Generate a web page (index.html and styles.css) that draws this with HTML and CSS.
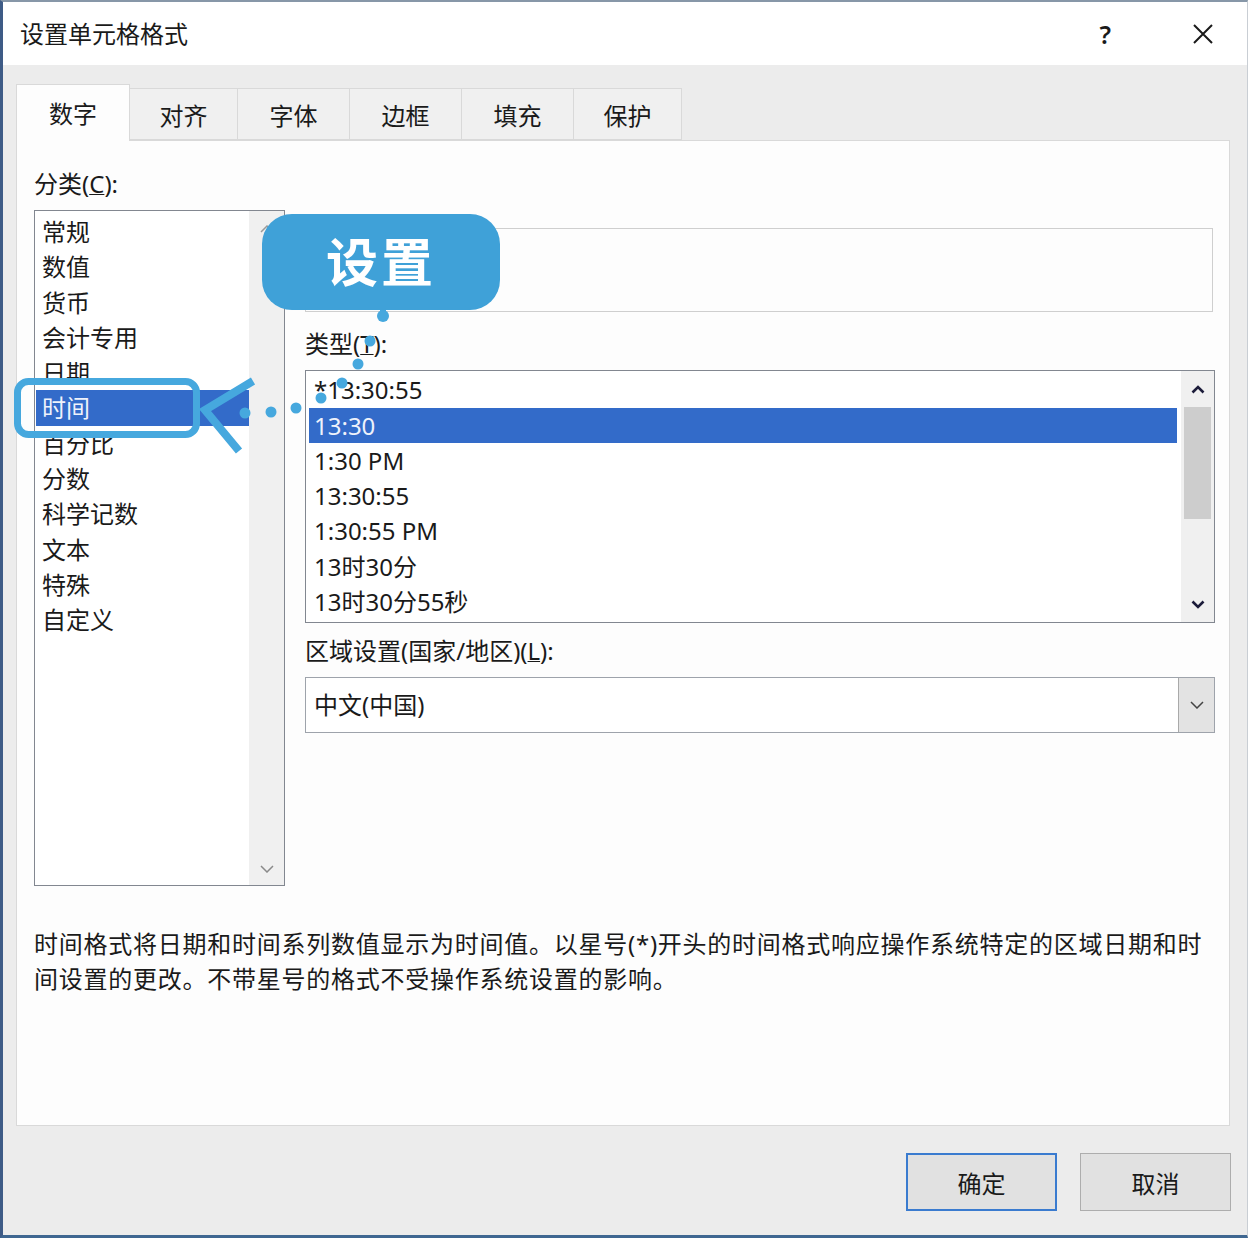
FILE: index.html
```html
<!DOCTYPE html>
<html lang="zh-CN">
<head>
    <meta charset="UTF-8">
    <title>设置单元格格式</title>
    <link rel="stylesheet" href="styles.css">
</head>
<body>

<div class="dialog">
    <div class="titlebar">
        <span class="title">设置单元格格式</span>
        <span class="help">?</span>
        <svg class="close" width="22" height="22" viewBox="0 0 22 22">
            <path d="M2 2 L20 20 M20 2 L2 20" stroke="#1a1a1a" stroke-width="2" fill="none"/>
        </svg>
    </div>

    <div class="body">
        <div class="tabs">
            <div class="tab active">数字</div>
            <div class="tab">对齐</div>
            <div class="tab">字体</div>
            <div class="tab">边框</div>
            <div class="tab">填充</div>
            <div class="tab">保护</div>
        </div>

        <div class="panel">
            <div class="columns">
                <div class="col-left">
                    <div class="label">分类(<u>C</u>):</div>
                    <div class="listbox category">
                        <ul class="items">
                            <li class="item">常规</li>
                            <li class="item">数值</li>
                            <li class="item">货币</li>
                            <li class="item">会计专用</li>
                            <li class="item">日期</li>
                            <li class="item selected">时间</li>
                            <li class="item">百分比</li>
                            <li class="item">分数</li>
                            <li class="item">科学记数</li>
                            <li class="item">文本</li>
                            <li class="item">特殊</li>
                            <li class="item">自定义</li>
                        </ul>
                        <div class="scrollbar light">
                            <svg class="arrow" width="14" height="8" viewBox="0 0 14 8"><path d="M1 7 L7 1 L13 7" stroke="#9a9a9a" stroke-width="1.5" fill="none"/></svg>
                            <div class="track"></div>
                            <svg class="arrow" width="14" height="8" viewBox="0 0 14 8"><path d="M1 1 L7 7 L13 1" stroke="#8a8a8a" stroke-width="1.5" fill="none"/></svg>
                        </div>
                    </div>
                </div>

                <div class="col-right">
                    <div class="sample"></div>
                    <div class="label">类型(<u>T</u>):</div>
                    <div class="listbox types">
                        <ul class="items">
                            <li class="item">*13:30:55</li>
                            <li class="item selected">13:30</li>
                            <li class="item">1:30 PM</li>
                            <li class="item">13:30:55</li>
                            <li class="item">1:30:55 PM</li>
                            <li class="item">13时30分</li>
                            <li class="item">13时30分55秒</li>
                        </ul>
                        <div class="scrollbar">
                            <div class="arrow-btn">
                                <svg width="14" height="9" viewBox="0 0 14 9"><path d="M1.5 7.5 L7 2 L12.5 7.5" stroke="#1c1c3a" stroke-width="2.6" fill="none"/></svg>
                            </div>
                            <div class="thumb"></div>
                            <div class="track"></div>
                            <div class="arrow-btn">
                                <svg width="14" height="9" viewBox="0 0 14 9"><path d="M1.5 1.5 L7 7 L12.5 1.5" stroke="#1c1c3a" stroke-width="2.6" fill="none"/></svg>
                            </div>
                        </div>
                    </div>
                    <div class="label">区域设置(国家/地区)(<u>L</u>):</div>
                    <div class="combo">
                        <span class="combo-value">中文(中国)</span>
                        <div class="combo-btn">
                            <svg width="14" height="8" viewBox="0 0 14 8"><path d="M1 1 L7 7 L13 1" stroke="#444" stroke-width="1.5" fill="none"/></svg>
                        </div>
                    </div>
                </div>
            </div>

            <p class="desc">时间格式将日期和时间系列数值显示为时间值。以星号(*)开头的时间格式响应操作系统特定的区域日期和时间设置的更改。不带星号的格式不受操作系统设置的影响。</p>
        </div>

        <div class="buttons">
            <button class="btn primary">确定</button>
            <button class="btn">取消</button>
        </div>
    </div>

    <!-- annotation drawn over the dialog -->
    <svg class="callout" width="1248" height="1238" viewBox="0 0 1248 1238">
        <rect x="17.5" y="381.5" width="179" height="53" rx="11" fill="none" stroke="#46a8de" stroke-width="7"/>
        <polyline points="253,381 205,410 239,451" fill="none" stroke="#46a8de" stroke-width="8"/>
        <g fill="#46a8de">
            <circle cx="245" cy="413" r="5.5"/>
            <circle cx="271" cy="412" r="5.5"/>
            <circle cx="296" cy="408" r="5.5"/>
            <circle cx="321" cy="398" r="5.5"/>
            <circle cx="342" cy="383" r="5.5"/>
            <circle cx="358" cy="364" r="5.5"/>
            <circle cx="370" cy="341" r="5.5"/>
            <rect x="380" y="300" width="6" height="14"/>
            <circle cx="383" cy="316" r="6"/>
        </g>
    </svg>
    <div class="bubble">设置</div>
</div>

</body>
</html>
```

FILE: styles.css
```css
body {
    margin: 0;
    padding: 0;
    font-family: "Noto Sans", "Noto Sans CJK SC", sans-serif;
    color: #1a1a1a;
    background-color: #ffffff;
}
.dialog {
    position: relative;
    width: 1248px;
    height: 1238px;
    box-sizing: border-box;
    display: flex;
    flex-direction: column;
    border-top: 2px solid #8797a8;
    border-left: 3px solid #3e5b86;
    border-bottom: 3px solid #3f6791;
    border-right: 1px solid #c9ced4;
    background-color: #ececec;
}
.titlebar {
    height: 63px;
    flex-shrink: 0;
    display: flex;
    align-items: center;
    padding-left: 17px;
    background-color: #ffffff;
}
.title {
    font-size: 24px;
    line-height: 34px;
    flex: 1;
}
.help {
    font-size: 25px;
    font-weight: 600;
    line-height: 34px;
    margin-right: 81px;
}
.close {
    margin-right: 33px;
}
.body {
    flex: 1;
    padding: 19px 0 0 13px;
}
.tabs {
    display: flex;
    align-items: flex-end;
    height: 56px;
}
.tab {
    height: 52px;
    width: 112px;
    box-sizing: border-box;
    display: flex;
    align-items: center;
    justify-content: center;
    font-size: 24px;
    background-color: #f0f0f0;
    border: 1px solid #d9d9d9;
    border-left: none;
}
.tab.active {
    position: relative;
    z-index: 1;
    width: 114px;
    height: 57px;
    margin-bottom: -1px;
    background-color: #fdfdfd;
    border-left: 1px solid #d9d9d9;
    border-bottom: none;
    padding-bottom: 2px;
}
.tab:nth-child(2), .tab:nth-child(6) {
    width: 108px;
}
.panel {
    width: 1214px;
    height: 986px;
    box-sizing: border-box;
    padding: 26px 0 0 17px;
    background-color: #fdfdfd;
    border: 1px solid #d9d9d9;
}
.columns {
    display: flex;
    gap: 20px;
}
.col-left {
    width: 251px;
}
.col-right {
    width: 910px;
    padding-top: 61px;
}
.label {
    font-size: 24px;
    line-height: 34px;
}
.label u {
    text-decoration-thickness: 1px;
}
.listbox {
    display: flex;
    box-sizing: border-box;
    border: 1px solid #828790;
    background-color: #ffffff;
    margin-top: 9px;
}
.items {
    flex: 1;
    list-style: none;
    margin: 0;
    padding: 0;
}
.item {
    height: 35.3px;
    line-height: 35.3px;
    font-size: 24px;
    white-space: nowrap;
}
.item.selected {
    background-color: #336bc9;
    color: #eef2fb;
}
.category {
    height: 676px;
}
.category .items {
    padding-top: 3px;
    padding-left: 1px;
}
.category .item {
    padding-left: 6px;
}
.types {
    height: 253px;
}
.types .items {
    padding: 1.3px 4px 0 3px;
}
.types .item {
    padding-left: 5px;
}
.scrollbar {
    width: 33px;
    display: flex;
    flex-direction: column;
    background-color: #f0f0f0;
}
.scrollbar.light {
    width: 35px;
    align-items: center;
    padding: 14px 0 12px;
    box-sizing: border-box;
}
.scrollbar .track {
    flex: 1;
}
.arrow-btn {
    height: 36px;
    display: flex;
    align-items: center;
    justify-content: center;
}
.thumb {
    height: 112px;
    margin: 0 3px;
    background-color: #cdcdcd;
}
.sample {
    height: 84px;
    box-sizing: border-box;
    border: 1px solid #cfcfcf;
    margin-right: 2px;
}
.col-right .label {
    margin-top: 15px;
}
.col-right .label + .listbox + .label {
    margin-top: 11px;
}
.combo {
    height: 56px;
    box-sizing: border-box;
    margin-top: 9px;
    display: flex;
    border: 1px solid #9ea3ab;
    background-color: #ffffff;
}
.combo-value {
    flex: 1;
    padding-left: 8px;
    font-size: 24px;
    line-height: 54px;
}
.combo-btn {
    width: 35px;
    display: flex;
    align-items: center;
    justify-content: center;
    background-color: #e3e3e3;
    border-left: 1px solid #a9a9a9;
}
.desc {
    width: 1180px;
    margin: 40px 0 0;
    font-size: 24px;
    line-height: 35px;
    letter-spacing: 0.75px;
}
.buttons {
    width: 1215px;
    display: flex;
    justify-content: flex-end;
    gap: 23px;
    margin-top: 27px;
}
.btn {
    width: 151px;
    height: 58px;
    font-family: "Noto Sans", "Noto Sans CJK SC", sans-serif;
    font-size: 24px;
    color: #1a1a1a;
    background-color: #e1e1e1;
    border: 1px solid #adadad;
    padding: 0;
}
.btn.primary {
    border: 2px solid #3a7bcf;
}
.callout {
    position: absolute;
    top: -2px;
    left: -3px;
    pointer-events: none;
}
.bubble {
    position: absolute;
    left: 259px;
    top: 212px;
    width: 238px;
    height: 96px;
    border-radius: 30px;
    background-color: #3fa1d8;
    color: #ffffff;
    font-size: 52px;
    font-weight: bold;
    line-height: 96px;
    text-align: center;
    letter-spacing: 3px;
}
```
